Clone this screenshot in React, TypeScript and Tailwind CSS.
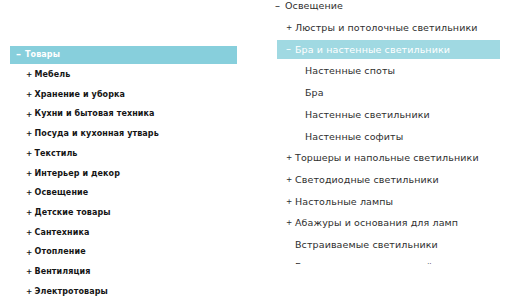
import React from "react";

const leftItems = [
  "Мебель",
  "Хранение и уборка",
  "Кухни и бытовая техника",
  "Посуда и кухонная утварь",
  "Текстиль",
  "Интерьер и декор",
  "Освещение",
  "Детские товары",
  "Сантехника",
  "Отопление",
  "Вентиляция",
  "Электротовары",
];

type RItem = { text: string; sign?: string; level: number; active?: boolean };

const rightItems: RItem[] = [
  { text: "Люстры и потолочные светильники", sign: "+", level: 1 },
  { text: "Бра и настенные светильники", sign: "–", level: 1, active: true },
  { text: "Настенные споты", level: 2 },
  { text: "Бра", level: 2 },
  { text: "Настенные светильники", level: 2 },
  { text: "Настенные софиты", level: 2 },
  { text: "Торшеры и напольные светильники", sign: "+", level: 1 },
  { text: "Светодиодные светильники", sign: "+", level: 1 },
  { text: "Настольные лампы", sign: "+", level: 1 },
  { text: "Абажуры и основания для ламп", sign: "+", level: 1 },
  { text: "Встраиваемые светильники", level: 1 },
  { text: "Гирлянды и декоративный свет", level: 1 },
];

function Sign({ s, w }: { s: string; w: string }) {
  return (
    <span className={w + " shrink-0 flex items-center tracking-normal"}>
      {s === "+" ? (
        <span className="text-[7.5px]">+</span>
      ) : s === "–" ? (
        <span className="text-[10px]">–</span>
      ) : null}
    </span>
  );
}

export default function App() {
  return (
    <div
      className="relative w-[510px] h-[300px] overflow-hidden bg-white flex"
      style={{ fontFamily: '"DejaVu Sans", "Open Sans", sans-serif' }}
    >
      {/* Left tree */}
      <div className="w-[268px] shrink-0 pl-[10px] pt-[46px] flex flex-col gap-[1.875px]">
        <div className="w-[227px] h-[18px] bg-[#87cfdc] flex items-center pl-[6px] pt-[1px] text-white text-[8px] tracking-[0.1px] font-bold leading-none">
          <Sign s="–" w="w-[9px]" />
          <span>Товары</span>
        </div>
        {leftItems.map((t) => (
          <div
            key={t}
            className="h-[18px] flex items-center pl-[16px] pt-[1px] text-[#151515] text-[8px] tracking-[0.1px] font-bold leading-none"
          >
            <Sign s="+" w="w-[8.5px]" />
            <span>{t}</span>
          </div>
        ))}
      </div>

      {/* Right tree */}
      <div className="w-[232px] shrink-0 h-[264px] overflow-hidden">
        <div className="-mt-[3.5px] flex flex-col gap-[2.73px]">
          <div className="h-[19px] flex items-center pl-[7px] text-[#2e2e2e] text-[9.5px] tracking-[0.1px] font-normal leading-none">
            <Sign s="–" w="w-[10px]" />
            <span>Освещение</span>
          </div>
          {rightItems.map((it) => (
            <div
              key={it.text}
              className={
                it.active
                  ? "ml-[9px] h-[19px] flex items-center pl-[9px] bg-[#a0d9e2] text-white text-[9.5px] tracking-[0.1px] font-normal leading-none"
                  : it.level === 2
                  ? "ml-[9px] h-[19px] flex items-center pl-[28px] text-[#2e2e2e] text-[9.5px] tracking-[0.1px] font-normal leading-none"
                  : "ml-[9px] h-[19px] flex items-center pl-[9px] text-[#2e2e2e] text-[9.5px] tracking-[0.1px] font-normal leading-none"
              }
            >
              {it.level === 1 && <Sign s={it.sign ?? ""} w="w-[9px]" />}
              <span>{it.text}</span>
            </div>
          ))}
        </div>
      </div>
    </div>
  );
}
